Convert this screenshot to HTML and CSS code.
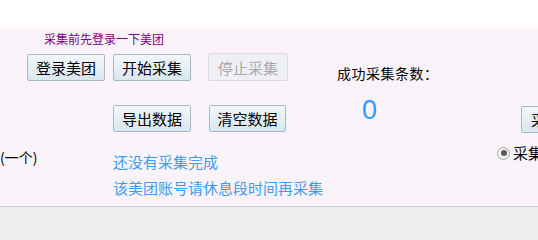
FILE: index.html
```html
<!DOCTYPE html>
<html lang="zh-CN">
<head>
<meta charset="utf-8">
<title>美团采集</title>
<link rel="stylesheet" href="styles.css">
</head>
<body>
<div class="topband"></div>
<div class="panel">
  <div class="note">采集前先登录一下美团</div>
  <button class="btn b-login">登录美团</button>
  <button class="btn b-start">开始采集</button>
  <button class="btn b-stop" disabled>停止采集</button>
  <div class="stats">
    <div class="stats-label">成功采集条数：</div>
    <div class="stats-num">0</div>
  </div>
  <button class="btn b-export">导出数据</button>
  <button class="btn b-clear">清空数据</button>
  <button class="btn b-right">采集设置</button>
  <div class="count">(一个)</div>
  <div class="msg msg1">还没有采集完成</div>
  <label class="radio-item"><span class="radio"><span class="dot"></span></span><span class="radio-text">采集全部</span></label>
  <div class="msg msg2">该美团账号请休息段时间再采集</div>
</div>
<div class="footer"></div>
</body>
</html>
```
FILE: styles.css
```css
html, body {
  margin: 0;
  padding: 0;
}
body {
  width: 538px;
  height: 221px;
  overflow: hidden;
  background: #efefef;
  font-family: "Noto Sans CJK SC", "Noto Sans", sans-serif;
  color: #000;
}
.topband {
  height: 28px;
  background: #ffffff;
}
.panel {
  height: 178px;
  background: #faf3fa;
  border-bottom: 1px solid #c3ced9;
  display: grid;
  grid-template-columns: 27px 78px 8px 78px 17px 80px 49px 160px 24px 1fr;
  grid-template-rows: 26px 27px 24px 27px 14px 26px 1fr;
  overflow: hidden;
}
.note {
  grid-column: 1 / 8;
  grid-row: 1;
  padding-left: 44px;
  padding-top: 4px;
  font-size: 12px;
  line-height: 14px;
  color: #800080;
  white-space: nowrap;
}
.btn {
  margin: 0;
  padding: 0;
  height: 27px;
  font-family: inherit;
  font-size: 15px;
  line-height: 25px;
  color: #000;
  background: linear-gradient(#f3f8fb, #d9e7ef);
  border: 1px solid #a6b8c6;
  border-radius: 2px;
  white-space: nowrap;
  overflow: hidden;
}
.btn:disabled {
  background: #eff0f5;
  border-color: #d9dbe3;
  color: #a9a9a9;
}
.b-login { grid-column: 2; grid-row: 2; width: 78px; }
.b-start { grid-column: 4; grid-row: 2; width: 78px; }
.b-stop { grid-column: 6; grid-row: 2; width: 80px; height: 28px; margin-top: -1px; }
.b-export { grid-column: 4; grid-row: 4; width: 78px; }
.b-clear { grid-column: 6; grid-row: 4; width: 77px; justify-self: start; margin-left: 1px; }
.b-right { grid-column: 10; grid-row: 4; width: 78px; justify-self: start; margin-top: 1px; text-align: left; padding-left: 9px; }
.stats {
  grid-column: 8;
  grid-row: 2 / 5;
  display: flex;
  flex-direction: column;
}
.stats-label {
  margin-top: 11px;
  font-size: 14px;
  line-height: 16px;
  letter-spacing: 0.5px;
  white-space: nowrap;
}
.stats-num {
  margin-top: 16px;
  padding-left: 25px;
  font-family: "Liberation Sans", sans-serif;
  font-size: 27px;
  line-height: 27px;
  color: #3399ff;
}
.count {
  grid-column: 1 / 4;
  grid-row: 6;
  font-size: 14px;
  line-height: 16px;
  margin-top: 3px;
  white-space: nowrap;
}
.msg {
  grid-column: 4 / 9;
  font-size: 15px;
  line-height: 18px;
  color: #3d9bf2;
  white-space: nowrap;
}
.msg1 { grid-row: 6; margin-top: 7px; }
.msg2 { grid-row: 7; margin-top: 7px; }
.radio-item {
  grid-column: 9 / 11;
  grid-row: 6;
  display: flex;
  align-items: center;
  gap: 3px;
  height: 16px;
  margin-top: -1px;
  white-space: nowrap;
}
.radio {
  flex: none;
  width: 11px;
  height: 11px;
  border: 1px solid #a9a9a9;
  border-radius: 50%;
  background: radial-gradient(#ffffff, #e6e6e6);
  display: flex;
  align-items: center;
  justify-content: center;
}
.dot {
  width: 6px;
  height: 6px;
  border-radius: 50%;
  background: #5a5a5a;
}
.radio-text {
  font-size: 15px;
  line-height: 16px;
}
.footer {
  height: 14px;
}
```
